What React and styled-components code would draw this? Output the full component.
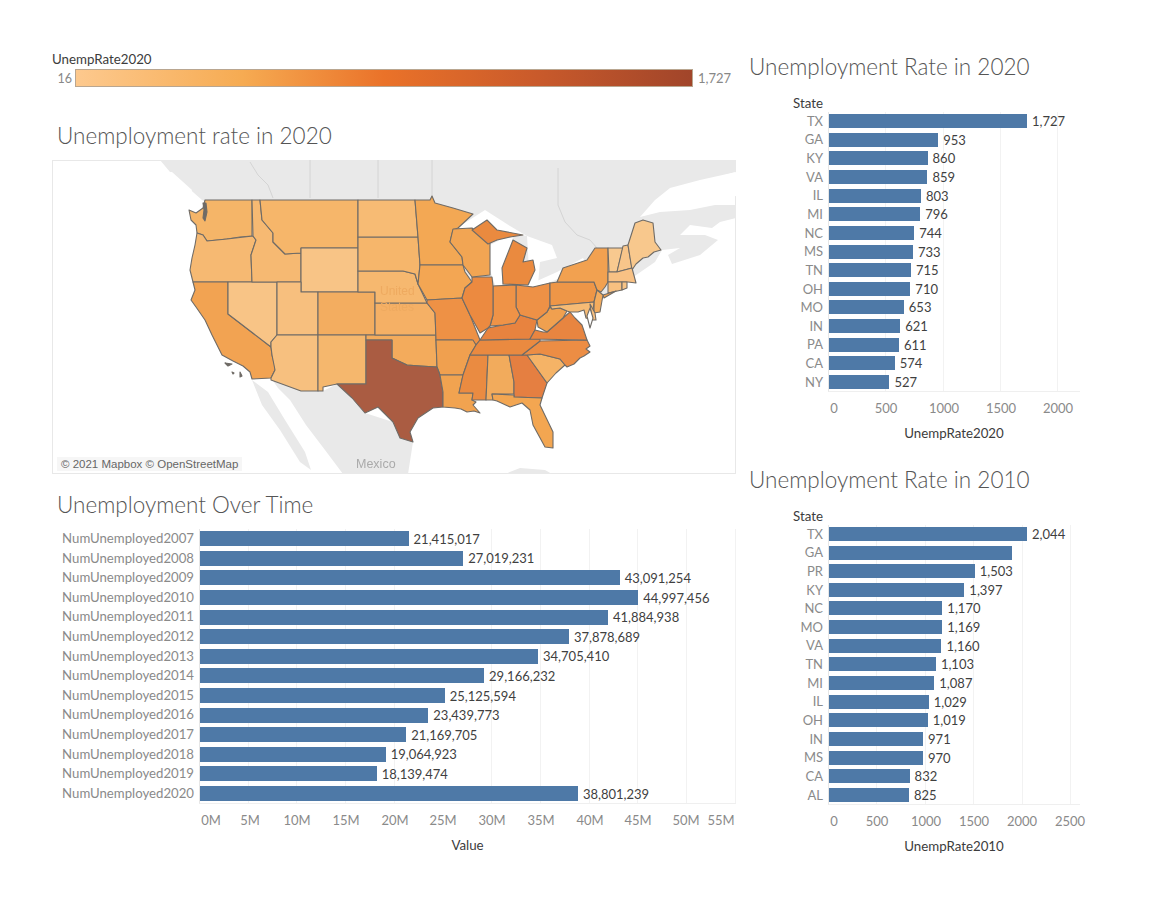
import styled, { createGlobalStyle } from "styled-components";

const GlobalStyle = createGlobalStyle`
  html, body {
    margin: 0;
    background: #ffffff;
    font-family: "Lato", "Open Sans", sans-serif;
  }
`;

const rate2020 = [
  ["TX", 1727], ["GA", 953], ["KY", 860], ["VA", 859], ["IL", 803],
  ["MI", 796], ["NC", 744], ["MS", 733], ["TN", 715], ["OH", 710],
  ["MO", 653], ["IN", 621], ["PA", 611], ["CA", 574], ["NY", 527],
];

const rate2010 = [
  ["TX", 2044], ["GA", 1885, true], ["PR", 1503], ["KY", 1397], ["NC", 1170],
  ["MO", 1169], ["VA", 1160], ["TN", 1103], ["MI", 1087], ["IL", 1029],
  ["OH", 1019], ["IN", 971], ["MS", 970], ["CA", 832], ["AL", 825],
];

const overTime = [
  ["NumUnemployed2007", 21415017], ["NumUnemployed2008", 27019231],
  ["NumUnemployed2009", 43091254], ["NumUnemployed2010", 44997456],
  ["NumUnemployed2011", 41884938], ["NumUnemployed2012", 37878689],
  ["NumUnemployed2013", 34705410], ["NumUnemployed2014", 29166232],
  ["NumUnemployed2015", 25125594], ["NumUnemployed2016", 23439773],
  ["NumUnemployed2017", 21169705], ["NumUnemployed2018", 19064923],
  ["NumUnemployed2019", 18139474], ["NumUnemployed2020", 38801239],
];

const states = [
  ["#f5b568", "205,200 252,200 252,236 240,237 227,239 218,240 207,241 203,235 197,233 196,225 191,220 189,210 196,213 203,208"],
  ["#f6b972", "197,233 203,235 207,241 227,239 253,236 256,240 251,255 252,282 193,282 190,270 192,258 195,245"],
  ["#f2a352", "193,282 228,282 228,314 271,347 272,355 275,366 275,370 271,378 252,379 250,372 243,366 233,361 222,355 216,343 212,335 205,320 196,307 191,300 195,290"],
  ["#f8c486", "228,282 277,282 277,335 271,342 271,347 228,314"],
  ["#f6b972", "252,200 260,200 262,220 273,233 273,242 285,254 301,253 301,282 252,282 251,255 256,240 253,236"],
  ["#f6b66a", "260,200 358,200 358,248 301,248 301,253 285,254 273,242 273,233 262,220"],
  ["#f8c486", "301,248 358,248 358,292 301,292"],
  ["#f7bf7e", "277,282 301,282 301,292 318,292 318,335 277,335"],
  ["#f3ad60", "318,292 375,292 375,335 318,335"],
  ["#f7c07f", "277,335 318,335 318,391 301,391 271,380 271,378 275,370 272,355 271,347 271,342"],
  ["#f5b76d", "318,335 366,335 366,384 337,384 323,387 323,391 318,391"],
  ["#f3ab5c", "366,335 436,335 436,340 437,367 420,366 407,365 392,358 392,340 366,340"],
  ["#f5b065", "375,303 427,303 435,313 436,335 375,335"],
  ["#f6b86f", "358,271 403,271 415,274 418,284 427,303 375,303 375,292 358,292"],
  ["#f6b66b", "358,237 418,237 420,265 418,284 415,274 403,271 358,271"],
  ["#f7bb74", "358,200 415,200 418,237 358,237"],
  ["#f3a854", "415,200 430,200 432,196 435,203 453,208 473,214 458,228 453,230 450,242 462,257 463,265 420,265 418,237"],
  ["#f3a653", "420,265 463,265 465,272 472,282 465,288 462,298 427,300 418,284"],
  ["#ee9145", "427,300 462,298 470,315 478,335 480,340 476,345 472,340 436,340 435,313 427,303"],
  ["#f0a04f", "436,340 473,340 476,345 470,355 463,375 440,375 437,367"],
  ["#aa5c42", "366,340 392,340 392,358 407,365 420,366 437,367 440,375 443,392 443,407 433,408 418,418 410,432 413,442 400,438 393,422 383,412 378,407 365,413 352,398 337,384 366,384"],
  ["#f1a350", "440,375 463,375 459,393 473,393 472,400 476,402 473,405 480,413 474,411 467,412 461,409 455,408 443,407 443,392"],
  ["#ea8b41", "470,355 488,355 486,400 472,400 473,393 459,393 463,375"],
  ["#f2ab5c", "488,355 509,355 514,382 514,394 492,394 493,400 486,400"],
  ["#e57f41", "509,355 527,355 547,383 542,398 514,397 514,382"],
  ["#f3a651", "492,394 514,395 514,397 542,398 540,405 553,432 553,448 545,447 533,425 530,410 522,403 510,407 497,401 493,400"],
  ["#f5b366", "527,355 540,354 560,359 565,365 556,373 547,383"],
  ["#ec8d44", "522,355 540,341 587,340 590,346 586,349 590,352 584,356 580,358 574,364 567,367 565,365 560,359 540,354 527,355"],
  ["#ea8a40", "476,345 480,340 530,339 540,339 540,341 522,355 470,355"],
  ["#e8833f", "480,340 488,328 503,325 515,323 520,315 537,320 535,330 530,339"],
  ["#e88540", "530,339 535,330 543,332 547,332 563,318 570,312 575,318 582,325 587,340"],
  ["#f0a04f", "537,320 547,312 550,307 552,309 560,308 567,311 563,318 547,332 538,327"],
  ["#ee9146", "516,285 533,287 550,283 550,306 547,312 537,320 520,315 516,307"],
  ["#ef9347", "493,286 516,285 516,307 520,315 515,323 503,325 490,326 493,315"],
  ["#ec8a40", "472,277 492,277 493,286 493,315 490,326 488,328 480,333 470,315 462,298 465,288 472,282"],
  ["#f2a553", "453,229 472,228 490,243 490,260 490,275 472,277 463,265 462,257 450,242"],
  ["#ea8a3f", "472,230 487,220 497,230 523,235 510,237 497,240 488,244"],
  ["#ea8a3f", "503,284 502,268 513,240 527,248 523,262 533,260 535,270 528,285"],
  ["#ee9647", "550,283 558,282 594,282 597,290 594,302 550,306"],
  ["#f2a150", "557,282 563,268 587,260 595,248 608,248 608,282 605,287 601,292 597,290 594,282"],
  ["#f8c98f", "608,248 623,248 617,272 609,272"],
  ["#f8c58a", "623,246 628,245 632,268 617,272"],
  ["#f8c88d", "628,245 635,223 643,220 653,223 655,242 661,250 654,252 648,257 643,258 636,264 632,270"],
  ["#f8c184", "608,272 617,272 632,268 636,283 628,282 608,282"],
  ["#f8c080", "608,282 622,282 622,290 608,293"],
  ["#f8c486", "622,282 627,282 627,288 622,290"],
  ["#f2a150", "603,295 616,291 604,298"],
  ["#f4ac5d", "597,290 603,295 600,312 594,313 594,302"],
  ["#f6bb75", "550,306 594,302 592,320 586,318 584,310 578,312 570,312 567,311 560,308 552,309"],
  ["#f8c080", "590,304 595,313 596,320 592,320"],
];

const hairlines = [
  "250,162 258,175 268,185 273,198",
  "310,160 310,198",
  "378,160 378,198",
  "432,160 432,198",
  "558,168 558,205 565,222 577,235 590,240 597,248",
];

const MapDrawing = () => (
  <MapSvg width="684" height="314" viewBox="52 160 684 314">
    <g fill="#e9e9e9">
      <polygon points="160,160 736,160 736,172 700,180 670,188 655,200 640,217 660,212 690,210 715,205 736,205 736,218 720,222 712,228 690,225 680,235 705,235 718,240 700,255 672,264 668,255 680,248 662,250 655,262 600,300 400,300 202,200 185,185 170,172" />
      <polygon points="271,378 323,391 337,384 365,413 393,422 413,442 408,474 343,474 325,450 306,425 290,400 278,388" />
      <polygon points="252,380 268,392 285,420 305,452 311,470 300,462 280,430 262,405" />
      <polygon points="505,474 520,468 545,470 552,474" />
    </g>
    <g fill="#ffffff">
      <polygon points="457,228 485,210 510,226 527,236 497,230 487,220 472,230" />
      <polygon points="490,245 500,240 513,237 510,250 503,268 502,285 495,285 490,270" />
      <polygon points="527,236 552,245 557,258 540,262 538,285 530,287" />
      <polygon points="528,285 557,272 583,258 586,263 560,278 532,290" />
      <polygon points="736,172 700,182 672,192 650,212 660,208 690,205 715,200 736,196" />
      <polygon points="161,172 172,172 192,190 190,196 172,186" />
    </g>
    <g fill="none" stroke="#d4d4d4" strokeWidth="1">
      {hairlines.map((points) => (
        <polyline key={points} points={points} />
      ))}
    </g>
    <g stroke="#6f6b66" strokeWidth="1.1" strokeLinejoin="round">
      {states.map(([fill, points]) => (
        <polygon key={points} fill={fill} points={points} />
      ))}
      <polygon fill="#ffffff" points="590,308 593,318 590,328 587,316" />
      <polygon fill="#6f6b66" points="203,203 206,203 207,212 205,221 203,218 204,210" />
      <polygon fill="#6f6b66" points="225,363 232,364 228,366" />
      <polygon fill="#6f6b66" points="232,372 234,373 233,374" />
      <polygon fill="#6f6b66" points="240,372 242,376 240,377" />
    </g>
    <MapLabel x="380" y="295">United</MapLabel>
    <MapLabel x="380" y="311">States</MapLabel>
    <PlaceLabel x="356" y="468">Mexico</PlaceLabel>
  </MapSvg>
);

const MapSvg = styled.svg`
  display: block;
  filter: blur(0.35px);
`;

const MapLabel = styled.text`
  font-family: "Liberation Sans", sans-serif;
  font-size: 12px;
  fill: #eeaa60;
`;

const PlaceLabel = styled.text`
  font-family: "Liberation Sans", sans-serif;
  font-size: 12.5px;
  fill: #aaaaaa;
`;

function BarChart({ rows, scale, gridStep, labelWidth, rowHeight, barHeight, ticks, valueSize, labelSize, axisTitle, header }) {
  return (
    <ChartBox>
      {header && <HeaderLabel style={{ width: labelWidth }}>{header}</HeaderLabel>}
      <ChartGrid>
        <LabelColumn $width={labelWidth}>
          {rows.map(([name]) => (
            <RowLabel key={name} $height={rowHeight} $size={labelSize}>{name}</RowLabel>
          ))}
        </LabelColumn>
        <Plot $step={gridStep}>
          {rows.map(([name, value, noValue]) => (
            <BarRow key={name} $height={rowHeight}>
              <Bar $height={barHeight} style={{ width: value * scale }} />
              {!noValue && (
                <BarValue $size={valueSize}>{value.toLocaleString("en-US")}</BarValue>
              )}
            </BarRow>
          ))}
        </Plot>
      </ChartGrid>
      <AxisTicks style={{ paddingLeft: labelWidth }}>
        {ticks.map(([label, center], i) => (
          <Tick key={label} style={{ marginLeft: i === 0 ? center : center - ticks[i - 1][1] }}>
            {label}
          </Tick>
        ))}
      </AxisTicks>
      <AxisTitle style={{ paddingLeft: labelWidth }}>{axisTitle}</AxisTitle>
    </ChartBox>
  );
}

export default function App() {
  return (
    <>
      <GlobalStyle />
      <Page>
        <LeftColumn>
          <LegendTitle>UnempRate2020</LegendTitle>
          <LegendRow>
            <LegendMin>16</LegendMin>
            <LegendBar />
            <LegendMax>1,727</LegendMax>
          </LegendRow>
          <MapTitle>Unemployment rate in 2020</MapTitle>
          <MapPanel>
            <MapDrawing />
            <Attribution>© 2021 Mapbox © OpenStreetMap</Attribution>
          </MapPanel>
          <OverTimeTitle>Unemployment Over Time</OverTimeTitle>
          <BarChart
            rows={overTime}
            scale={9.74 / 1000000}
            gridStep={48.7}
            labelWidth={147}
            rowHeight={19.6}
            barHeight={15}
            valueSize={13}
            labelSize={13.2}
            axisTitle="Value"
            ticks={[
              ["0M", 12], ["5M", 51], ["10M", 98], ["15M", 147], ["20M", 196], ["25M", 244],
              ["30M", 293], ["35M", 342], ["40M", 391], ["45M", 439], ["50M", 487], ["55M", 522],
            ]}
          />
        </LeftColumn>
        <RightColumn>
          <SideTitle>Unemployment Rate in 2020</SideTitle>
          <BarChart
            rows={rate2020}
            scale={0.1146}
            gridStep={57.3}
            labelWidth={78}
            rowHeight={18.67}
            barHeight={14}
            valueSize={13}
            labelSize={13}
            header="State"
            axisTitle="UnempRate2020"
            ticks={[["0", 6], ["500", 58], ["1000", 116], ["1500", 173], ["2000", 230]]}
          />
          <SideTitle $top={25}>Unemployment Rate in 2010</SideTitle>
          <BarChart
            rows={rate2010}
            scale={0.0969}
            gridStep={48.4}
            labelWidth={78}
            rowHeight={18.67}
            barHeight={14}
            valueSize={13}
            labelSize={13}
            header="State"
            axisTitle="UnempRate2010"
            ticks={[["0", 6], ["500", 49], ["1000", 98], ["1500", 146], ["2000", 194], ["2500", 242]]}
          />
        </RightColumn>
      </Page>
    </>
  );
}

const Page = styled.div`
  display: grid;
  grid-template-columns: 684px 330px;
  column-gap: 14px;
  padding: 52px 0 0 52px;
  width: 1101px;
  height: 865px;
  overflow: hidden;
`;

const LeftColumn = styled.div`
  display: flex;
  flex-direction: column;
`;

const RightColumn = styled.div`
  display: flex;
  flex-direction: column;
`;

const LegendTitle = styled.div`
  height: 14px;
  line-height: 14px;
  font-size: 13.3px;
  color: #3c3c3c;
`;

const LegendRow = styled.div`
  display: flex;
  align-items: center;
  height: 18px;
  margin-top: 3px;
  width: 684px;
`;

const LegendMin = styled.div`
  width: 23px;
  padding-right: 3px;
  box-sizing: border-box;
  text-align: right;
  font-size: 12.5px;
  color: #888888;
`;

const LegendBar = styled.div`
  width: 618px;
  height: 18px;
  box-sizing: border-box;
  border: 1px solid #b9a690;
  background: linear-gradient(to right, #fdc98e 0%, #f6ab52 27%, #ea7229 50%, #c95a2b 75%, #a1452a 100%);
`;

const LegendMax = styled.div`
  margin-left: 5px;
  font-size: 13px;
  color: #888888;
  white-space: nowrap;
`;

const Heading = styled.div`
  height: 30px;
  line-height: 30px;
  font-size: 22.5px;
  font-weight: 300;
  color: #555555;
  white-space: nowrap;
`;

const MapTitle = styled(Heading)`
  margin-top: 34px;
  padding-left: 5px;
`;

const OverTimeTitle = styled(Heading)`
  margin-top: 16px;
  padding-left: 5px;
`;

const SideTitle = styled(Heading)`
  margin-top: ${(props) => props.$top || 0}px;
  margin-left: -1px;
`;

const MapPanel = styled.div`
  position: relative;
  margin-top: 9px;
  width: 684px;
  height: 314px;
  box-shadow: inset 0 0 0 1px #e8e8e8;
  overflow: hidden;
`;

const Attribution = styled.div`
  position: absolute;
  left: 5px;
  bottom: 3px;
  padding: 1px 4px;
  background: rgba(245, 245, 245, 0.9);
  font-family: "Liberation Sans", sans-serif;
  font-size: 11.5px;
  color: #666666;
`;

const ChartBox = styled.div`
  display: flex;
  flex-direction: column;
`;

const HeaderLabel = styled.div`
  box-sizing: border-box;
  height: 14px;
  line-height: 14px;
  margin-top: 14px;
  margin-bottom: 1.6px;
  padding-right: 5px;
  text-align: right;
  font-size: 13.3px;
  color: #3c3c3c;
`;

const ChartGrid = styled.div`
  display: flex;
  margin-top: 9px;
  ${HeaderLabel} + & {
    margin-top: 0;
  }
`;

const LabelColumn = styled.div`
  flex: 0 0 ${(props) => props.$width}px;
`;

const RowLabel = styled.div`
  height: ${(props) => props.$height}px;
  line-height: ${(props) => props.$height}px;
  padding-right: 5px;
  text-align: right;
  font-size: ${(props) => props.$size}px;
  color: #8a8a8a;
  white-space: nowrap;
`;

const Plot = styled.div`
  flex: 1;
  border-left: 1px solid #e6e6e6;
  border-bottom: 1px solid #efefef;
  background-image: repeating-linear-gradient(
    to right,
    transparent 0,
    transparent ${(props) => props.$step - 1}px,
    #f2f2f2 ${(props) => props.$step - 1}px,
    #f2f2f2 ${(props) => props.$step}px
  );
`;

const BarRow = styled.div`
  display: flex;
  align-items: center;
  gap: 5px;
  height: ${(props) => props.$height}px;
`;

const Bar = styled.div`
  height: ${(props) => props.$height}px;
  background: #4e79a7;
`;

const BarValue = styled.div`
  font-size: ${(props) => props.$size}px;
  color: #3f3f3f;
  white-space: nowrap;
`;

const AxisTicks = styled.div`
  display: flex;
  align-items: center;
  height: 16px;
  margin-top: 8px;
`;

const Tick = styled.div`
  flex: 0 0 auto;
  width: 0;
  min-width: 0;
  display: flex;
  justify-content: center;
  font-size: 13px;
  color: #8a8a8a;
  white-space: nowrap;
`;

const AxisTitle = styled.div`
  height: 14px;
  line-height: 14px;
  margin-top: 9.5px;
  text-align: center;
  font-size: 13.3px;
  color: #3c3c3c;
`;
